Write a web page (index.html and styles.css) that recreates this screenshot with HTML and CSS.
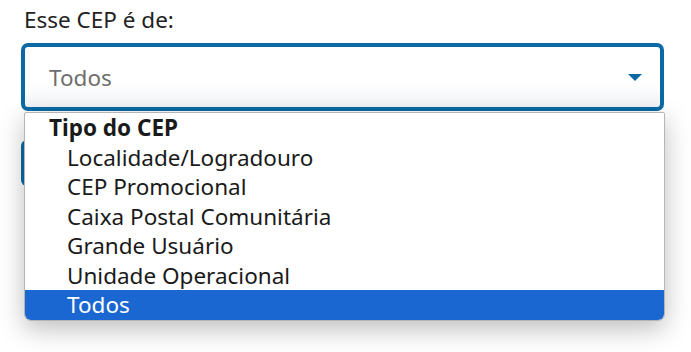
FILE: index.html
```html
<!DOCTYPE html>
<html lang="pt-BR">

<head>
    <meta charset="UTF-8">
    <title>Busca CEP</title>
    <link rel="stylesheet" href="styles.css">
</head>

<body>
    <div class="campo">
        <label for="tipoCep">Esse CEP é de:</label>
        <div class="select-wrap">
            <div class="select" id="tipoCep">
                <span>Todos</span>
                <span class="caret"></span>
            </div>

            <!-- lista aberta do select -->
            <ul class="listbox">
                <li class="grupo">Tipo do CEP</li>
                <li>Localidade/Logradouro</li>
                <li>CEP Promocional</li>
                <li>Caixa Postal Comunitária</li>
                <li>Grande Usuário</li>
                <li>Unidade Operacional</li>
                <li class="ativo">Todos</li>
            </ul>
        </div>
        <button type="button" class="btn" aria-label="Buscar"></button>
    </div>
</body>

</html>
```

FILE: styles.css
```css
html,
body {
    min-height: 100vh;
}

body {
    font-family: "Noto Sans", sans-serif;
    background-color: white;
    margin: 0;
    padding: 0;
}

.campo {
    padding: 6px 27px 0 21px;
    min-height: 346px;
}

label {
    display: block;
    font-size: 22.5px;
    line-height: 28px;
    color: #222;
    padding-left: 3px;
}

.select-wrap {
    position: relative;
    margin-top: 9px;
}

.select {
    height: 60px;
    border: 4px solid #0b6aa6;
    border-radius: 7px;
    background: linear-gradient(#fff 60%, #f1f3f5);
    display: flex;
    align-items: center;
    justify-content: space-between;
    padding: 0 18px 0 24px;
    font-size: 22.5px;
    color: #6e6e6e;
}

.caret {
    width: 0;
    height: 0;
    border-left: 7px solid transparent;
    border-right: 7px solid transparent;
    border-top: 7px solid #0b6aa6;
}

.listbox {
    position: absolute;
    top: 69px;
    left: 3px;
    right: -1px;
    margin: 0;
    padding: 0;
    list-style: none;
    background-color: white;
    border: 1px solid #b5b5b5;
    border-radius: 2px 2px 7px 7px;
    box-shadow: 0 8px 26px rgba(0, 0, 0, 0.26);
    overflow: hidden;
    z-index: 1;
}

.listbox li {
    font-size: 22.5px;
    line-height: 29.5px;
    color: #1a1a1a;
    padding-left: 42px;
}

.listbox .grupo {
    font-weight: bold;
    padding-left: 24px;
}

.listbox .ativo {
    background-color: #1b67d1;
    color: white;
}

.btn {
    display: block;
    margin-top: 29px;
    width: 200px;
    height: 46px;
    border: none;
    border-radius: 6px;
    background-color: #0b6aa6;
}
```
